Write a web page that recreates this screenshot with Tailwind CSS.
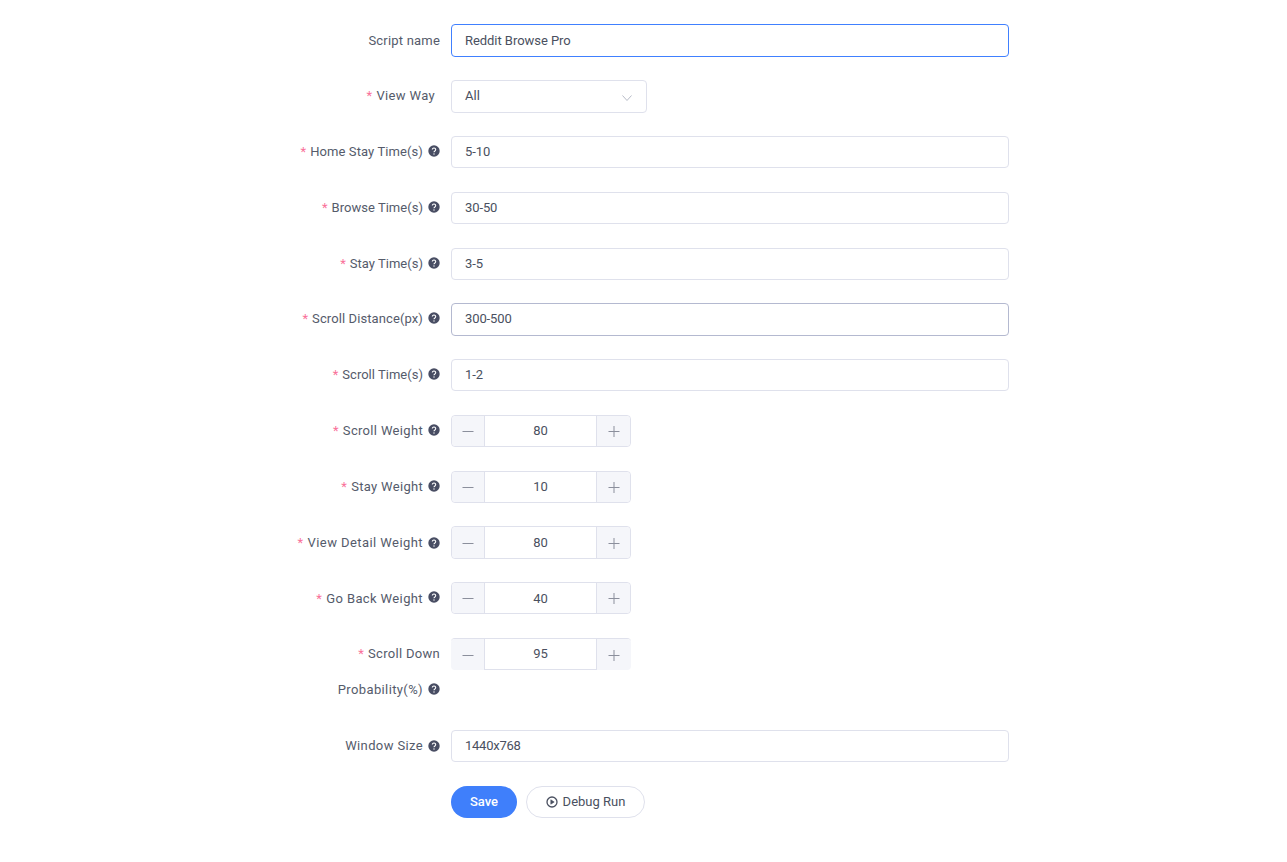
<!doctype html>
<html><head><meta charset="utf-8"><script src="https://cdn.jsdelivr.net/npm/@tailwindcss/browser@4"></script></head>
<body class="bg-white font-['Roboto',sans-serif] text-[13px] text-[#555b6b]">
<form class="w-[1009px] pt-[24.46px] flex flex-col gap-[23.4px]">

<div class="flex h-[32.38px]"><label class="w-[440px] flex items-center justify-end tracking-[0.2px]">Script name</label><div class="ml-[11px] w-[558px] border border-[#4080ff] rounded-[4px] px-[13px] flex items-center text-[#4a5060] tracking-[-0.05px]">Reddit Browse Pro</div></div>

<div class="flex h-[32.38px]"><label class="w-[440px] flex items-center justify-end tracking-[0.35px] pr-[5px] pb-px"><span class="text-[#f9719a] mr-1">*</span>View Way</label><div class="ml-[11px] w-[196px] border border-[#dfe1ec] rounded-[4px] px-[13px] flex items-center justify-between text-[#4a5060]"><span class="mb-[2px]">All</span><svg class="w-[12px] h-[12px] mt-1" viewBox="0 0 12 12" fill="none" stroke="#b8bcc8" stroke-width="1"><path d="M1.5 3.5 6 8.5l4.5-5"/></svg></div></div>

<div class="flex h-[32.38px]"><label class="w-[440px] flex items-center justify-end tracking-[0.1px]"><span class="text-[#f9719a] mr-1">*</span>Home Stay Time(s)<svg class="w-3 h-3 ml-[5px] mb-[2px]" viewBox="0 0 12 12"><circle cx="6" cy="6" r="5.7" fill="#484d63"/><path d="M4.3 4.6a1.7 1.6 0 1 1 2.6 1.4c-.6.4-.9.6-.9 1.3" fill="none" stroke="#fff" stroke-width="1.1"/><circle cx="6" cy="9" r=".7" fill="#fff"/></svg></label><div class="ml-[11px] w-[558px] border border-[#dfe1ec] rounded-[4px] px-[13px] flex items-center text-[#4a5060] tracking-[-0.1px]">5-10</div></div>

<div class="flex h-[32.38px]"><label class="w-[440px] flex items-center justify-end tracking-[0.03px]"><span class="text-[#f9719a] mr-1">*</span>Browse Time(s)<svg class="w-3 h-3 ml-[5px] mb-[2px]" viewBox="0 0 12 12"><circle cx="6" cy="6" r="5.7" fill="#484d63"/><path d="M4.3 4.6a1.7 1.6 0 1 1 2.6 1.4c-.6.4-.9.6-.9 1.3" fill="none" stroke="#fff" stroke-width="1.1"/><circle cx="6" cy="9" r=".7" fill="#fff"/></svg></label><div class="ml-[11px] w-[558px] border border-[#dfe1ec] rounded-[4px] px-[13px] flex items-center text-[#4a5060] tracking-[-0.1px]">30-50</div></div>

<div class="flex h-[32.38px]"><label class="w-[440px] flex items-center justify-end tracking-[0.02px]"><span class="text-[#f9719a] mr-1">*</span>Stay Time(s)<svg class="w-3 h-3 ml-[5px] mb-[2px]" viewBox="0 0 12 12"><circle cx="6" cy="6" r="5.7" fill="#484d63"/><path d="M4.3 4.6a1.7 1.6 0 1 1 2.6 1.4c-.6.4-.9.6-.9 1.3" fill="none" stroke="#fff" stroke-width="1.1"/><circle cx="6" cy="9" r=".7" fill="#fff"/></svg></label><div class="ml-[11px] w-[558px] border border-[#dfe1ec] rounded-[4px] px-[13px] flex items-center text-[#4a5060] tracking-[-0.1px]">3-5</div></div>

<div class="flex h-[32.38px]"><label class="w-[440px] flex items-center justify-end tracking-[0.1px] pb-px"><span class="text-[#f9719a] mr-1">*</span>Scroll Distance(px)<svg class="w-3 h-3 ml-[5px] mb-px" viewBox="0 0 12 12"><circle cx="6" cy="6" r="5.7" fill="#484d63"/><path d="M4.3 4.6a1.7 1.6 0 1 1 2.6 1.4c-.6.4-.9.6-.9 1.3" fill="none" stroke="#fff" stroke-width="1.1"/><circle cx="6" cy="9" r=".7" fill="#fff"/></svg></label><div class="ml-[11px] w-[558px] border border-[#b4b9d0] rounded-[4px] px-[13px] pb-px flex items-center text-[#4a5060] tracking-[-0.1px]">300-500</div></div>

<div class="flex h-[32.38px]"><label class="w-[440px] flex items-center justify-end tracking-[0.02px]"><span class="text-[#f9719a] mr-1">*</span>Scroll Time(s)<svg class="w-3 h-3 ml-[5px] mb-[2px]" viewBox="0 0 12 12"><circle cx="6" cy="6" r="5.7" fill="#484d63"/><path d="M4.3 4.6a1.7 1.6 0 1 1 2.6 1.4c-.6.4-.9.6-.9 1.3" fill="none" stroke="#fff" stroke-width="1.1"/><circle cx="6" cy="9" r=".7" fill="#fff"/></svg></label><div class="ml-[11px] w-[558px] border border-[#dfe1ec] rounded-[4px] px-[13px] flex items-center text-[#4a5060] tracking-[-0.1px]">1-2</div></div>

<div class="flex h-[32.38px]"><label class="w-[440px] flex items-center justify-end tracking-[0.33px]"><span class="text-[#f9719a] mr-1">*</span>Scroll Weight<svg class="w-3 h-3 ml-[5px] mb-[2px]" viewBox="0 0 12 12"><circle cx="6" cy="6" r="5.7" fill="#484d63"/><path d="M4.3 4.6a1.7 1.6 0 1 1 2.6 1.4c-.6.4-.9.6-.9 1.3" fill="none" stroke="#fff" stroke-width="1.1"/><circle cx="6" cy="9" r=".7" fill="#fff"/></svg></label><div class="ml-[11px] w-[180px] border border-[#dfe1ec] rounded-[4px] flex text-[#4a5060]"><span class="w-[33px] bg-[#f5f6fa] border-r border-[#dfe1ec] flex items-center justify-center rounded-l-[4px]"><svg class="w-3 h-3" viewBox="0 0 12 12" stroke="#8b8f9c"><path d="M.5 6.5h11"/></svg></span><span class="flex-1 flex items-center justify-center">80</span><span class="w-[34px] bg-[#f5f6fa] border-l border-[#dfe1ec] flex items-center justify-center rounded-r-[4px]"><svg class="w-3 h-3" viewBox="0 0 12 12" stroke="#8b8f9c"><path d="M.5 6.5h11M6 1v11"/></svg></span></div></div>

<div class="flex h-[32.38px]"><label class="w-[440px] flex items-center justify-end tracking-[0.3px]"><span class="text-[#f9719a] mr-1">*</span>Stay Weight<svg class="w-3 h-3 ml-[5px] mb-[2px]" viewBox="0 0 12 12"><circle cx="6" cy="6" r="5.7" fill="#484d63"/><path d="M4.3 4.6a1.7 1.6 0 1 1 2.6 1.4c-.6.4-.9.6-.9 1.3" fill="none" stroke="#fff" stroke-width="1.1"/><circle cx="6" cy="9" r=".7" fill="#fff"/></svg></label><div class="ml-[11px] w-[180px] border border-[#dfe1ec] rounded-[4px] flex text-[#4a5060]"><span class="w-[33px] bg-[#f5f6fa] border-r border-[#dfe1ec] flex items-center justify-center rounded-l-[4px]"><svg class="w-3 h-3" viewBox="0 0 12 12" stroke="#8b8f9c"><path d="M.5 6.5h11"/></svg></span><span class="flex-1 flex items-center justify-center">10</span><span class="w-[34px] bg-[#f5f6fa] border-l border-[#dfe1ec] flex items-center justify-center rounded-r-[4px]"><svg class="w-3 h-3" viewBox="0 0 12 12" stroke="#8b8f9c"><path d="M.5 6.5h11M6 1v11"/></svg></span></div></div>

<div class="flex h-[32.38px]"><label class="w-[440px] flex items-center justify-end tracking-[0.43px]"><span class="text-[#f9719a] mr-1">*</span>View Detail Weight<svg class="w-3 h-3 ml-[5px]" viewBox="0 0 12 12"><circle cx="6" cy="6" r="5.7" fill="#484d63"/><path d="M4.3 4.6a1.7 1.6 0 1 1 2.6 1.4c-.6.4-.9.6-.9 1.3" fill="none" stroke="#fff" stroke-width="1.1"/><circle cx="6" cy="9" r=".7" fill="#fff"/></svg></label><div class="ml-[11px] w-[180px] border border-[#dfe1ec] rounded-[4px] flex text-[#4a5060]"><span class="w-[33px] bg-[#f5f6fa] border-r border-[#dfe1ec] flex items-center justify-center rounded-l-[4px]"><svg class="w-3 h-3" viewBox="0 0 12 12" stroke="#8b8f9c"><path d="M.5 6.5h11"/></svg></span><span class="flex-1 flex items-center justify-center">80</span><span class="w-[34px] bg-[#f5f6fa] border-l border-[#dfe1ec] flex items-center justify-center rounded-r-[4px]"><svg class="w-3 h-3" viewBox="0 0 12 12" stroke="#8b8f9c"><path d="M.5 6.5h11M6 1v11"/></svg></span></div></div>

<div class="flex h-[32.38px]"><label class="w-[440px] flex items-center justify-end tracking-[0.38px]"><span class="text-[#f9719a] mr-1">*</span>Go Back Weight<svg class="w-3 h-3 ml-[5px] mb-[2px]" viewBox="0 0 12 12"><circle cx="6" cy="6" r="5.7" fill="#484d63"/><path d="M4.3 4.6a1.7 1.6 0 1 1 2.6 1.4c-.6.4-.9.6-.9 1.3" fill="none" stroke="#fff" stroke-width="1.1"/><circle cx="6" cy="9" r=".7" fill="#fff"/></svg></label><div class="ml-[11px] w-[180px] border border-[#dfe1ec] rounded-[4px] flex text-[#4a5060]"><span class="w-[33px] bg-[#f5f6fa] border-r border-[#dfe1ec] flex items-center justify-center rounded-l-[4px]"><svg class="w-3 h-3" viewBox="0 0 12 12" stroke="#8b8f9c"><path d="M.5 6.5h11"/></svg></span><span class="flex-1 flex items-center justify-center">40</span><span class="w-[34px] bg-[#f5f6fa] border-l border-[#dfe1ec] flex items-center justify-center rounded-r-[4px]"><svg class="w-3 h-3" viewBox="0 0 12 12" stroke="#8b8f9c"><path d="M.5 6.5h11M6 1v11"/></svg></span></div></div>

<div class="flex h-[68.6px]"><label class="w-[440px] flex flex-col items-end tracking-[0.3px]"><span class="h-[31px] flex items-center"><span class="text-[#f9719a] mr-1">*</span>Scroll Down</span><span class="mt-[5px] h-[31px] flex items-center tracking-[0.38px]">Probability(%)<svg class="w-3 h-3 ml-[5px]" viewBox="0 0 12 12"><circle cx="6" cy="6" r="5.7" fill="#484d63"/><path d="M4.3 4.6a1.7 1.6 0 1 1 2.6 1.4c-.6.4-.9.6-.9 1.3" fill="none" stroke="#fff" stroke-width="1.1"/><circle cx="6" cy="9" r=".7" fill="#fff"/></svg></span></label><div class="ml-[11px] w-[180px] h-[32.38px] border-t border-[#dfe1ec] rounded-[4px] flex text-[#4a5060]"><span class="w-[34px] bg-[#f5f6fa] border-r border-[#dfe1ec] flex items-center justify-center rounded-l-[4px]"><svg class="w-3 h-3" viewBox="0 0 12 12" stroke="#8b8f9c"><path d="M.5 6.5h11"/></svg></span><span class="flex-1 flex items-center justify-center border-b border-[#dfe1ec]">95</span><span class="w-[35px] bg-[#f5f6fa] border-l border-[#dfe1ec] flex items-center justify-center rounded-r-[4px]"><svg class="w-3 h-3" viewBox="0 0 12 12" stroke="#8b8f9c"><path d="M.5 6.5h11M6 1v11"/></svg></span></div></div>

<div class="flex h-[32.38px]"><label class="w-[440px] flex items-center justify-end tracking-[0.37px]">Window Size<svg class="w-3 h-3 ml-[5px]" viewBox="0 0 12 12"><circle cx="6" cy="6" r="5.7" fill="#484d63"/><path d="M4.3 4.6a1.7 1.6 0 1 1 2.6 1.4c-.6.4-.9.6-.9 1.3" fill="none" stroke="#fff" stroke-width="1.1"/><circle cx="6" cy="9" r=".7" fill="#fff"/></svg></label><div class="ml-[11px] w-[558px] border border-[#dfe1ec] rounded-[4px] px-[13px] flex items-center text-[#4a5060] tracking-[-0.25px]">1440x768</div></div>

<div class="flex h-[32px] pl-[451px] gap-[9px]"><button type="button" class="w-[66px] rounded-full bg-[#3f7ffb] text-white font-medium">Save</button><button type="button" class="w-[119px] rounded-full border border-[#dfe1ec] bg-white flex items-center justify-center gap-[5px] text-[#4a5060]"><svg class="w-3 h-3" viewBox="0 0 12 12" fill="none" stroke="#4a5060" stroke-width="1.3"><circle cx="6" cy="6" r="5"/><path d="M4.8 3.8v4.4L8.2 6z" fill="#4a5060" stroke-width=".6"/></svg>Debug Run</button></div>

</form>
</body></html>
